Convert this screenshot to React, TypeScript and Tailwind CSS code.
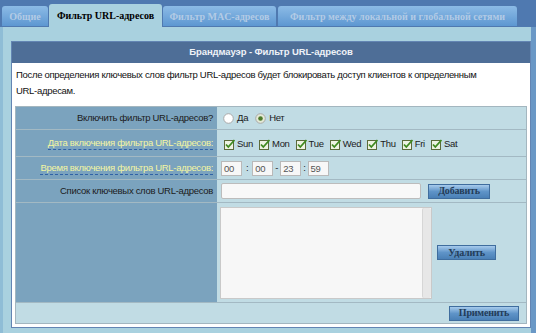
import React from "react";

const Check = () => (
  <svg width="11" height="11" viewBox="0 0 11 11" className="shrink-0">
    <rect x="0.5" y="1.5" width="9" height="9" fill="#eef3e2" stroke="#5c6b3a" />
    <path d="M2 5.5 L4.3 8 L10.5 1" fill="none" stroke="#3f8a1f" strokeWidth="1.8" />
  </svg>
);

const Radio = ({ on }: { on?: boolean }) => (
  <svg width="11" height="11" viewBox="0 0 11 11" className="shrink-0">
    <circle cx="5.5" cy="5.5" r="4.8" fill={on ? "#e4ead8" : "#ffffff"} stroke="#a9a9a9" />
    {on && <circle cx="5.5" cy="5.5" r="2.3" fill="#4d7a2a" />}
  </svg>
);

const btnCls =
  "shrink-0 h-[15px] flex items-center justify-center border border-[#3f6d9e] bg-gradient-to-b from-[#a7cbec] via-[#5f94c8] to-[#4a80b6] text-[#233c58] font-bold text-[10px] tracking-[-0.2px] leading-none font-['Liberation_Serif',serif]";

const days = ["Sun", "Mon", "Tue", "Wed", "Thu", "Fri", "Sat"];

const TimeBox = ({ v }: { v: string }) => (
  <div className="w-[21px] shrink-0 h-[15px] border border-[#b9b9b9] bg-[#f7f7f7] text-[#555] leading-[13px] pl-[2px]">
    {v}
  </div>
);

export default function App() {
  return (
    <div className="w-[536px] h-[333px] bg-[#4f79b0] flex flex-col overflow-hidden font-['Liberation_Sans',sans-serif]">
      {/* tabs */}
      <div className="h-[27px] flex items-end pl-[2px] font-['Liberation_Serif',serif] font-bold text-[10px]">
        <div className="w-[46px] shrink-0 h-[20px] mb-[1px] rounded-t-[3px] bg-gradient-to-b from-[#8cbbe6] to-[#5d97d1] text-[#b3cbe5] flex items-center justify-center">
          Общие
        </div>
        <div className="ml-[1px] w-[113px] shrink-0 h-[23px] rounded-t-[3px] bg-[#a9d1df] text-black flex items-center justify-center">
          Фильтр URL-адресов
        </div>
        <div className="ml-[1px] w-[113px] shrink-0 h-[20px] mb-[1px] rounded-t-[3px] bg-gradient-to-b from-[#8cbbe6] to-[#5d97d1] text-[#b3cbe5] flex items-center justify-center">
          Фильтр MAC-адресов
        </div>
        <div className="ml-[2px] w-[239px] shrink-0 h-[20px] mb-[1px] rounded-t-[3px] bg-gradient-to-b from-[#8cbbe6] to-[#5d97d1] text-[#b3cbe5] flex items-center justify-center">
          Фильтр между локальной и глобальной сетями
        </div>
      </div>

      <div className="flex-1 flex">
        <div className="w-[3px] bg-[#8fbdd6]" />
        <div className="flex-1 bg-[#a9d1df] pt-[14px] pl-[8px]">
          {/* panel */}
          <div className="w-[520px] h-[287px] border border-[#6385b3] bg-white flex flex-col text-[9.5px] tracking-[-0.3px]">
            <div className="h-[21px] bg-[#4e6e97] text-[#eef2f7] font-bold tracking-[-0.1px] flex items-center justify-center">
              Брандмауэр - Фильтр URL-адресов
            </div>
            <div className="pt-[4px] pl-[4px] leading-[16px] text-[#111]">
              После определения ключевых слов фильтр URL-адресов будет блокировать доступ клиентов к определенным
              <br />
              URL-адресам.
            </div>
            {/* table */}
            <div className="mt-[7px] ml-[3px] w-[512px] border border-[#a3b6bf] text-[#1b1b1b]">
              {/* row 1 */}
              <div className="h-[22px] flex">
                <div className="w-[201px] shrink-0 bg-[#7ba3be] flex items-center justify-end pr-[4px]">
                  Включить фильтр URL-адресов?
                </div>
                <div className="flex-1 bg-[#c1dce4] flex items-center pl-[6px]">
                  <Radio />
                  <span className="ml-[3px]">Да</span>
                  <span className="ml-[7px] flex"><Radio on /></span>
                  <span className="ml-[3px]">Нет</span>
                </div>
              </div>
              {/* row 2 */}
              <div className="h-[27px] flex border-t border-[#a3b9c3]">
                <div className="w-[201px] shrink-0 bg-[#7ba3be] flex items-center justify-end pr-[4px]">
                  <span className="text-[#f4f6a2] border-b border-dashed border-[#2f62a6] leading-[13px]">
                    Дата включения фильтра URL-адресов:
                  </span>
                </div>
                <div className="flex-1 bg-[#c1dce4] flex items-center pl-[7px] pt-[2px]">
                  {days.map((d, i) => (
                    <div key={d} className={`flex items-center ${i ? "ml-[6px]" : ""}`}>
                      <Check />
                      <span className="ml-[2px]">{d}</span>
                    </div>
                  ))}
                </div>
              </div>
              {/* row 3 */}
              <div className="h-[23px] flex border-t border-[#a3b9c3]">
                <div className="w-[201px] shrink-0 bg-[#7ba3be] flex items-center justify-end pr-[4px]">
                  <span className="text-[#f4f6a2] border-b border-dashed border-[#2f62a6] leading-[13px]">
                    Время включения фильтра URL-адресов:
                  </span>
                </div>
                <div className="flex-1 bg-[#c1dce4] flex items-center pl-[4px] text-[#222]">
                  <TimeBox v="00" />
                  <span className="mx-[4px]">:</span>
                  <TimeBox v="00" />
                  <span className="mx-[2px]">-</span>
                  <TimeBox v="23" />
                  <span className="mx-[2px]">:</span>
                  <TimeBox v="59" />
                </div>
              </div>
              {/* row 4 */}
              <div className="h-[23px] flex border-t border-[#a3b9c3]">
                <div className="w-[201px] shrink-0 bg-[#7ba3be] flex items-center justify-end pr-[4px]">
                  Список ключевых слов URL-адресов
                </div>
                <div className="flex-1 bg-[#c1dce4] grid grid-cols-[200px_62px] gap-x-[7px] items-center justify-start pl-[4px]">
                  <div className="h-[16px] border border-[#bcbcbc] rounded-[2px] bg-[#f8f8f8]" />
                  <div className={btnCls}>Добавить</div>
                </div>
              </div>
              {/* row 5 */}
              <div className="h-[100px] flex border-t border-[#a3b9c3]">
                <div className="w-[201px] shrink-0 bg-[#7ba3be]" />
                <div className="flex-1 bg-[#c1dce4] grid grid-cols-[212px_59px] gap-x-[5px] items-center justify-start pl-[3px]">
                  <div className="h-[92px] border border-[#c9c9c9] bg-[#f7f7f7] flex justify-end">
                    <div className="w-[9px] h-full bg-[#e7e7e7] border-l border-[#d6d6d6] rounded-[2px]" />
                  </div>
                  <div className={btnCls}>Удалить</div>
                </div>
              </div>
              {/* row 6 */}
              <div className="h-[21px] flex items-center justify-end pr-[7px] bg-[#c1dce4] border-t border-[#a3b9c3]">
                <div className={`${btnCls} w-[70px]`}>Применить</div>
              </div>
            </div>
          </div>
        </div>
        <div className="w-[5px] bg-[#6a98c6]" />
      </div>
    </div>
  );
}
